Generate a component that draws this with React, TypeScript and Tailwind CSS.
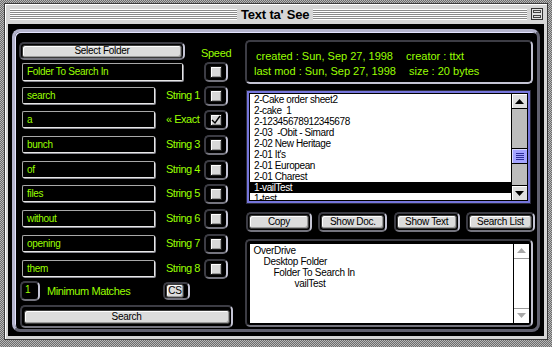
import React from "react";

const ROWS = [
  { text: "search", label: "String 1", checked: false, mt: "mt-[6px]" },
  { text: "a", label: "« Exact", checked: true, mt: "mt-[7px]" },
  { text: "bunch", label: "String 3", checked: false, mt: "mt-[8px]" },
  { text: "of", label: "String 4", checked: false, mt: "mt-[8px]" },
  { text: "files", label: "String 5", checked: false, mt: "mt-[7px]" },
  { text: "without", label: "String 6", checked: false, mt: "mt-[8px]" },
  { text: "opening", label: "String 7", checked: false, mt: "mt-[8px]" },
  { text: "them", label: "String 8", checked: false, mt: "mt-[8px]" },
];

const FILES = [
  "2-Cake order sheet2",
  "2-cake  1",
  "2-12345678912345678",
  "2-03  -Obit - Simard",
  "2-02 New Heritage",
  "2-01 It's",
  "2-01 European",
  "2-01 Charest",
  "1-vailTest",
  "1-test",
];

const PATH = [
  { name: "OverDrive", pl: "pl-[4px]" },
  { name: "Desktop Folder", pl: "pl-[14px]" },
  { name: "Folder To Search In", pl: "pl-[24px]" },
  { name: "vailTest", pl: "pl-[45px]" },
];

function Well({ className, children }: { className: string; children: React.ReactNode }) {
  return (
    <div
      className={`rounded-[5px] border-2 border-t-[#3c3c44] border-l-[#3c3c44] border-r-[#c4c4d4] border-b-[#74747e] flex items-center justify-center ${className}`}
    >
      {children}
    </div>
  );
}

function Field({ text, className }: { text: string; className: string }) {
  return (
    <div
      className={`bg-black rounded-[2px] border border-t-[#a8a8a8] border-l-[#a8a8a8] border-r-[#e8e8e8] border-b-[#e8e8e8] shadow-[1px_1px_0_#8a8a92] flex items-center pl-[4px] text-[#99ff00] text-[10px] tracking-[-0.3px] leading-none ${className}`}
    >
      {text}
    </div>
  );
}

function Check({ checked }: { checked: boolean }) {
  return (
    <Well className="w-[24px] h-[20px]">
      <div className="w-[12px] h-[12px] bg-[#d8d8d8] border border-[#1a1a1a] shadow-[inset_1px_1px_0_#fff,inset_-1px_-1px_0_#9a9a9a] flex items-center justify-center">
        {checked && (
          <svg width="10" height="10" viewBox="0 0 10 10">
            <path d="M1 5 L4 8 L9 1" fill="none" stroke="#000" strokeWidth="1.4" />
          </svg>
        )}
      </div>
    </Well>
  );
}

function Btn({ label, className }: { label: string; className: string }) {
  return (
    <div
      className={`bg-[#dcdcdc] rounded-[3px] border border-[#3a3a3a] shadow-[inset_1px_1px_0_#fff,inset_-1px_-1px_0_#9c9c9c] flex items-center justify-center text-black text-[10px] tracking-[-0.3px] leading-none ${className}`}
    >
      {label}
    </div>
  );
}

function Arrow({ up, color }: { up: boolean; color: string }) {
  return (
    <svg width="9" height="5" viewBox="0 0 9 5">
      <path d={up ? "M0 5 L4.5 0 L9 5 Z" : "M0 0 L4.5 5 L9 0 Z"} fill={color} />
    </svg>
  );
}

function TitleBar() {
  return (
    <div className="h-[20px] flex items-center pl-[5px] pr-[4px]">
      <div className="w-[227px] h-[11px] bg-[repeating-linear-gradient(to_bottom,#ffffff_0px,#ffffff_1px,#8a8a8a_1px,#8a8a8a_2px)]" />
      <div className="px-[4px] text-[13px] font-bold text-black tracking-[-0.2px] leading-none">Text ta' See</div>
      <div className="flex-1 h-[11px] bg-[repeating-linear-gradient(to_bottom,#ffffff_0px,#ffffff_1px,#8a8a8a_1px,#8a8a8a_2px)]" />
      <div className="ml-[4px] w-[12px] h-[12px] border border-[#333] bg-[#e2e2e2] flex flex-col justify-center gap-[2px] px-[1px]">
        <div className="h-[3px] border border-[#444]" />
        <div className="h-[3px] border border-[#444]" />
      </div>
    </div>
  );
}

function LeftPanel() {
  return (
    <div className="w-[229px] pl-[7px] pt-[10px] flex flex-col">
      <div className="h-[18px] flex items-start">
        <Well className="-ml-[3px] w-[166px] h-[18px] p-[1px]">
          <Btn label="Select Folder" className="w-[160px] h-[13px]" />
        </Well>
        <div className="ml-[16px] mt-[6px] text-[11px] text-[#99ff00] tracking-[-0.3px] leading-none">Speed</div>
      </div>
      <div className="mt-[3px] h-[18px] flex items-center">
        <Field text="Folder To Search In" className="w-[161px] h-[18px]" />
        <div className="ml-[21px]">
          <Check checked={false} />
        </div>
      </div>
      {ROWS.map((r, i) => (
        <div key={i} className={`h-[17px] flex items-center ${r.mt}`}>
          <Field text={r.text} className="w-[133px] h-[17px]" />
          <div className="ml-[11px] w-[38px] text-[11px] text-[#99ff00] tracking-[-0.5px] leading-none whitespace-nowrap">
            {r.label}
          </div>
          <Check checked={r.checked} />
        </div>
      ))}
      <div className="mt-[4px] h-[20px] flex items-center">
        <Well className="-ml-[2px] w-[20px] h-[20px] justify-start items-start pl-[3px] pt-[2px]">
          <span className="text-[10px] text-[#99ff00] leading-none">1</span>
        </Well>
        <div className="ml-[7px] w-[116px] text-[11px] text-[#99ff00] tracking-[-0.4px] leading-none">Minimum Matches</div>
        <Well className="w-[27px] h-[18px] pr-[3px]">
          <Btn label="CS" className="w-[18px] h-[14px]" />
        </Well>
      </div>
      <Well className="mt-[4px] -ml-[2px] w-[213px] h-[23px]">
        <Btn label="Search" className="w-[206px] h-[14px]" />
      </Well>
    </div>
  );
}

function RightPanel() {
  return (
    <div className="w-[293px] flex flex-col">
      <div className="mt-[8px] ml-[1px] w-[288px] h-[44px] rounded-[5px] border-2 border-t-[#3c3c44] border-l-[#3c3c44] border-r-[#c4c4d4] border-b-[#c4c4d4] pt-[7px] text-[#99ff00] text-[11px] leading-[15px] whitespace-nowrap">
        <div className="flex">
          <span className="ml-[9px] w-[150px]">created : Sun, Sep 27, 1998</span>
          <span>creator : ttxt</span>
        </div>
        <div className="flex">
          <span className="ml-[7px] w-[155px]">last mod : Sun, Sep 27, 1998</span>
          <span>size : 20 bytes</span>
        </div>
      </div>

      <div className="mt-[7px] ml-[3px] w-[283px] h-[112px] border-2 border-[#7676dc] shadow-[0_0_0_1px_#2c2c3c]">
        <div className="h-full border border-black bg-white flex overflow-hidden">
          <div className="flex-1 flex flex-col overflow-hidden">
            {FILES.map((f, i) => (
              <div
                key={i}
                className={`h-[11px] shrink-0 pl-[4px] text-[10px] leading-[11px] tracking-[-0.4px] whitespace-pre ${
                  i === 8 ? "bg-black text-white" : "text-black"
                }`}
              >
                {f}
              </div>
            ))}
          </div>
          <div className="w-[16px] border-l border-black flex flex-col bg-[#bcbcbc]">
            <div className="h-[15px] bg-[#dedede] border-b border-black flex items-center justify-center shadow-[inset_1px_1px_0_#fff]">
              <Arrow up={true} color="#000" />
            </div>
            <div className="flex-1 flex flex-col">
              <div className="mt-[39px] h-[16px] bg-[#a4a4ff] border-y border-black shadow-[inset_1px_1px_0_#d8d8ff] flex flex-col items-center justify-center gap-[1px]">
                <div className="w-[8px] h-px bg-[#2e2e9a]" />
                <div className="w-[8px] h-px bg-[#2e2e9a]" />
                <div className="w-[8px] h-px bg-[#2e2e9a]" />
                <div className="w-[8px] h-px bg-[#2e2e9a]" />
              </div>
            </div>
            <div className="h-[15px] bg-[#dedede] border-t border-black flex items-center justify-center shadow-[inset_1px_1px_0_#fff]">
              <Arrow up={false} color="#000" />
            </div>
          </div>
        </div>
      </div>

      <div className="mt-[9px] ml-[2px] w-[289px] flex justify-between">
        <Well className="w-[66px] h-[20px]">
          <Btn label="Copy" className="w-[60px] h-[14px]" />
        </Well>
        <Well className="w-[69px] h-[20px]">
          <Btn label="Show Doc." className="w-[63px] h-[14px]" />
        </Well>
        <Well className="w-[66px] h-[20px]">
          <Btn label="Show Text" className="w-[60px] h-[14px]" />
        </Well>
        <Well className="w-[69px] h-[20px]">
          <Btn label="Search List" className="w-[63px] h-[14px]" />
        </Well>
      </div>

      <Well className="mt-[7px] ml-[1px] w-[288px] h-[88px]">
        <div className="w-[281px] h-[81px] border border-black bg-white flex">
          <div className="flex-1 pt-[1px] flex flex-col">
            {PATH.map((p, i) => (
              <div key={i} className={`h-[11px] text-[10px] leading-[11px] tracking-[-0.3px] text-black whitespace-nowrap ${p.pl}`}>
                {p.name}
              </div>
            ))}
          </div>
          <div className="w-[16px] border-l border-black flex flex-col">
            <div className="h-[15px] border-b border-[#9a9a9a] flex items-center justify-center">
              <Arrow up={true} color="#a8a8a8" />
            </div>
            <div className="flex-1" />
            <div className="h-[15px] border-t border-[#9a9a9a] flex items-center justify-center">
              <Arrow up={false} color="#a8a8a8" />
            </div>
          </div>
        </div>
      </Well>
    </div>
  );
}

export default function App() {
  return (
    <div className="w-[552px] h-[347px] overflow-hidden bg-[repeating-conic-gradient(#6c6c6c_0%_25%,#b6b6b6_0%_50%)] bg-[length:2px_2px] pt-[3px] pl-[4px] font-['Liberation_Sans',Arial,sans-serif]">
      <div className="w-[544px] h-[337px] border border-[#3a3a3a] bg-[#d6d6d6] shadow-[inset_1px_1px_0_#fff] flex flex-col">
        <TitleBar />
        <div className="mx-[3px] mb-[3px] flex-1 bg-black pt-[5px] px-[4px] pb-[4px]">
          <div className="h-full rounded-[8px] border-[3px] border-t-[#b4b4cc] border-l-[#b4b4cc] border-r-[#60606e] border-b-[#60606e] shadow-[inset_1px_1px_0_#e4e4ff] flex">
            <LeftPanel />
            <RightPanel />
          </div>
        </div>
      </div>
    </div>
  );
}
